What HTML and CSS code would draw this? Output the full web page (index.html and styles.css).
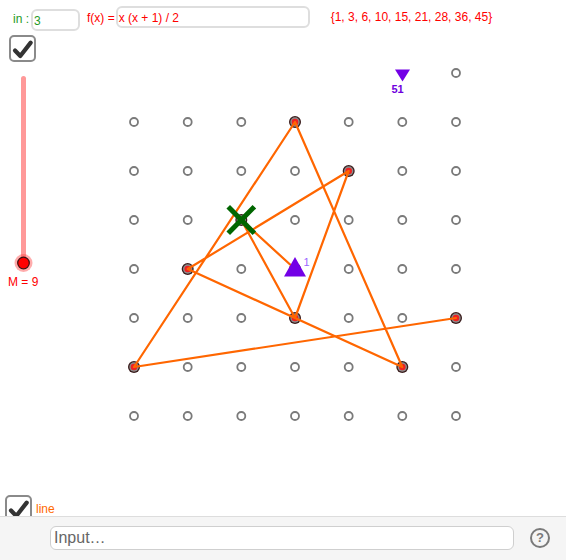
FILE: index.html
```html
<!DOCTYPE html>
<html>
<head>
<meta charset="utf-8">
<link rel="stylesheet" href="styles.css">
</head>
<body>
<div class="app">
  <div class="view">
    <svg class="canvas" width="566" height="516" viewBox="0 0 566 516">
      <g class="grid">
        <circle cx="134" cy="122" r="4"/><circle cx="187.7" cy="122" r="4"/><circle cx="241.3" cy="122" r="4"/><circle cx="348.7" cy="122" r="4"/><circle cx="402.3" cy="122" r="4"/><circle cx="456" cy="122" r="4"/>
        <circle cx="134" cy="171" r="4"/><circle cx="187.7" cy="171" r="4"/><circle cx="241.3" cy="171" r="4"/><circle cx="295" cy="171" r="4"/><circle cx="402.3" cy="171" r="4"/><circle cx="456" cy="171" r="4"/>
        <circle cx="134" cy="220" r="4"/><circle cx="187.7" cy="220" r="4"/><circle cx="295" cy="220" r="4"/><circle cx="348.7" cy="220" r="4"/><circle cx="402.3" cy="220" r="4"/><circle cx="456" cy="220" r="4"/>
        <circle cx="134" cy="269" r="4"/><circle cx="241.3" cy="269" r="4"/><circle cx="348.7" cy="269" r="4"/><circle cx="402.3" cy="269" r="4"/><circle cx="456" cy="269" r="4"/>
        <circle cx="134" cy="318" r="4"/><circle cx="187.7" cy="318" r="4"/><circle cx="241.3" cy="318" r="4"/><circle cx="348.7" cy="318" r="4"/><circle cx="402.3" cy="318" r="4"/>
        <circle cx="187.7" cy="367" r="4"/><circle cx="241.3" cy="367" r="4"/><circle cx="295" cy="367" r="4"/><circle cx="348.7" cy="367" r="4"/><circle cx="456" cy="367" r="4"/>
        <circle cx="134" cy="416" r="4"/><circle cx="187.7" cy="416" r="4"/><circle cx="241.3" cy="416" r="4"/><circle cx="295" cy="416" r="4"/><circle cx="348.7" cy="416" r="4"/><circle cx="402.3" cy="416" r="4"/><circle cx="456" cy="416" r="4"/>
        <circle cx="456" cy="73" r="4"/>
      </g>
      <g class="hits">
        <g transform="translate(295 122)"><circle class="ho" r="6"/><circle class="hm" r="4.7"/><circle class="hi" r="3.3"/></g>
        <g transform="translate(348.7 171)"><circle class="ho" r="6"/><circle class="hm" r="4.7"/><circle class="hi" r="3.3"/></g>
        <g transform="translate(241.3 220)"><circle class="ho" r="6"/><circle class="hm" r="4.7"/><circle class="hi" r="3.3"/></g>
        <g transform="translate(187.7 269)"><circle class="ho" r="6"/><circle class="hm" r="4.7"/><circle class="hi" r="3.3"/></g>
        <g transform="translate(295 269)"><circle class="ho" r="6"/><circle class="hm" r="4.7"/><circle class="hi" r="3.3"/></g>
        <g transform="translate(295 318)"><circle class="ho" r="6"/><circle class="hm" r="4.7"/><circle class="hi" r="3.3"/></g>
        <g transform="translate(134 367)"><circle class="ho" r="6"/><circle class="hm" r="4.7"/><circle class="hi" r="3.3"/></g>
        <g transform="translate(402.3 367)"><circle class="ho" r="6"/><circle class="hm" r="4.7"/><circle class="hi" r="3.3"/></g>
        <g transform="translate(456 318)"><circle class="ho" r="6"/><circle class="hm" r="4.7"/><circle class="hi" r="3.3"/></g>
      </g>
      <polyline class="path" points="295,269 241.3,220 295,318 348.7,171 187.7,269 402.3,367 295,122 134,367 456,318"/>
      <g class="cross">
        <line x1="230" y1="208.5" x2="252.6" y2="231.5"/>
        <line x1="230" y1="231.5" x2="252.6" y2="208.5"/>
      </g>
      <polygon class="tri" points="295,257 284,276.5 306,276.5"/>
      <text class="lbl-1" x="303.5" y="265.5">1</text>
      <polygon class="tri" points="395,69.5 410,69.5 402.5,81.5"/>
      <text class="lbl-51" x="391.5" y="92.5">51</text>
    </svg>

    <div class="toprow">
      <span class="lbl lbl-in green">in :</span>
      <div class="field field-in green">3</div>
      <span class="lbl lbl-f red">f(x) =</span>
      <div class="field field-f red">x (x + 1) / 2</div>
      <span class="set red">{1, 3, 6, 10, 15, 21, 28, 36, 45}</span>
    </div>

    <div class="checkbox cb-top">
      <svg width="23" height="23" viewBox="0 0 23 23"><polyline points="4,13.5 9.3,19 19.7,5.6"/></svg>
    </div>

    <svg class="slider" width="30" height="200" viewBox="0 0 30 200">
      <line class="track" x1="14.5" y1="6.5" x2="14.5" y2="191"/>
      <circle class="halo" cx="14.5" cy="191" r="9"/>
      <circle class="knob" cx="14.5" cy="191" r="5.8"/>
    </svg>
    <div class="slider-lbl red">M = 9</div>

    <div class="line-row">
      <div class="checkbox">
        <svg width="23" height="23" viewBox="0 0 23 23"><polyline points="4,13.5 9.3,19 19.7,5.6"/></svg>
      </div>
      <span class="orange">line</span>
    </div>
  </div>

  <div class="inputbar">
    <div class="algebra-input">Input…</div>
    <div class="help">?</div>
  </div>
</div>
</body>
</html>
```

FILE: styles.css
```css
html, body {
  margin: 0;
  padding: 0;
  background: #ffffff;
}

.app {
  width: 566px;
  height: 560px;
  font-family: "Liberation Sans", Arial, sans-serif;
  font-size: 12px;
  overflow: hidden;
}

.view {
  position: relative;
  height: 516px;
  display: flex;
  flex-direction: column;
  overflow: hidden;
}

.canvas {
  position: absolute;
  top: 0;
  left: 0;
  z-index: 0;
}

.view > .toprow,
.view > .checkbox,
.view > .slider,
.view > .slider-lbl,
.view > .line-row {
  position: relative;
  z-index: 1;
}

.green { color: #1f9a1f; }
.red { color: #ff0000; }
.orange { color: #ff6a00; }

.toprow {
  display: flex;
  align-items: flex-start;
  padding-left: 13px;
  line-height: 14px;
}

.lbl-in { margin-top: 12px; }

.field {
  box-sizing: border-box;
  height: 22px;
  border: 2px solid #dedede;
  border-radius: 6px;
  background: #ffffff;
  display: flex;
  align-items: center;
  padding-left: 1px;
  padding-top: 1px;
}

.field-in {
  width: 49px;
  margin-left: 2px;
  margin-top: 9px;
  font-size: 12px;
}

.lbl-f {
  margin-left: 7px;
  margin-top: 11px;
}

.field-f {
  width: 194px;
  margin-left: 1px;
  margin-top: 6px;
}

.set {
  margin-left: 21px;
  margin-top: 10px;
}

.checkbox {
  box-sizing: border-box;
  width: 27px;
  height: 27px;
  border: 2px solid #8a8a8a;
  border-radius: 5px;
  background: #ffffff;
  flex: none;
}

.checkbox svg {
  display: block;
}

.checkbox polyline {
  fill: none;
  stroke: #333333;
  stroke-width: 4.2;
  stroke-linecap: round;
  stroke-linejoin: round;
}

.cb-top {
  margin-left: 9px;
  margin-top: 4px;
}

.slider {
  display: block;
  margin-left: 9px;
  margin-top: 10px;
}

.slider .track {
  stroke: #ff9999;
  stroke-width: 5;
  stroke-linecap: round;
}

.slider .halo {
  fill: rgba(255, 70, 70, 0.45);
}

.slider .knob {
  fill: #ff0000;
  stroke: #3a1010;
  stroke-width: 1.2;
}

.slider-lbl {
  margin-left: 8px;
  margin-top: 3px;
  line-height: 15px;
}

.line-row {
  margin-top: auto;
  margin-bottom: -6px;
  display: flex;
  align-items: center;
  gap: 4px;
  padding-left: 5px;
}

/* canvas drawing */
.grid circle {
  fill: #ffffff;
  stroke: #7a7a7a;
  stroke-width: 1.8;
}

.hits .ho { fill: #3a1c1c; }
.hits .hm { fill: #8c8c8c; }
.hits .hi { fill: #ee2222; }

.path {
  fill: none;
  stroke: #ff6600;
  stroke-width: 2.2;
  stroke-linejoin: round;
  stroke-linecap: round;
}

.cross line {
  stroke: #006600;
  stroke-width: 5;
  stroke-linecap: square;
}

.tri {
  fill: #7300e6;
}

.lbl-1 {
  font-family: "Liberation Sans", Arial, sans-serif;
  font-size: 11px;
  fill: #9a66ff;
}

.lbl-51 {
  font-family: "Liberation Sans", Arial, sans-serif;
  font-size: 11px;
  font-weight: bold;
  fill: #7000dd;
}

/* input bar */
.inputbar {
  box-sizing: border-box;
  height: 44px;
  border-top: 1px solid #dddddd;
  background: #f5f5f5;
  display: flex;
  align-items: center;
  padding-left: 50px;
  padding-bottom: 2px;
}

.algebra-input {
  box-sizing: border-box;
  width: 464px;
  height: 24px;
  border: 1px solid #cfcfcf;
  border-radius: 6px;
  background: #ffffff;
  font-size: 16px;
  color: #666666;
  padding-left: 3px;
  display: flex;
  align-items: center;
}

.help {
  box-sizing: border-box;
  width: 20px;
  height: 20px;
  margin-left: 16px;
  border: 2px solid #7a7a7a;
  border-radius: 50%;
  color: #7a7a7a;
  font-size: 13px;
  font-weight: bold;
  display: flex;
  align-items: center;
  justify-content: center;
  line-height: 1;
}
```
